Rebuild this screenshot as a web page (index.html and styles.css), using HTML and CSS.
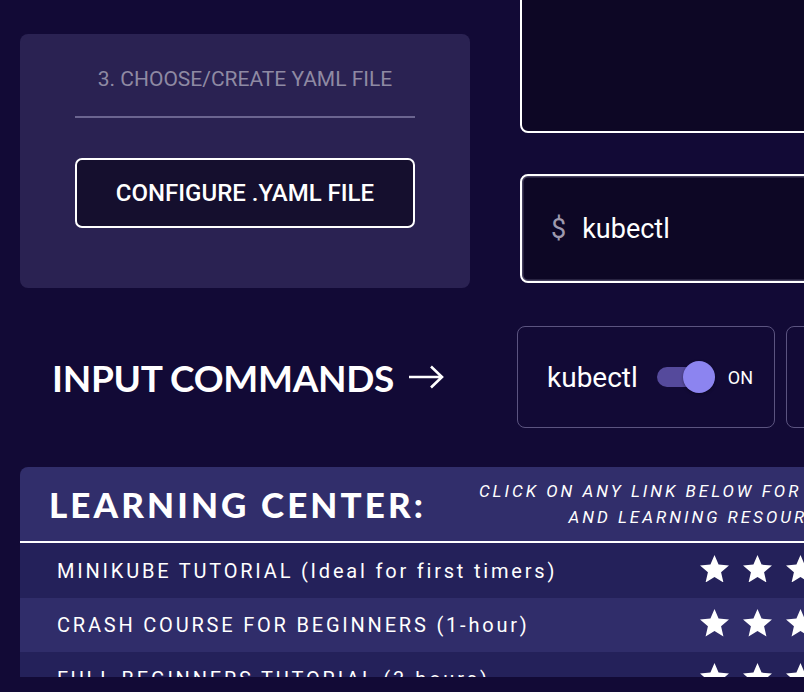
FILE: index.html
```html
<!DOCTYPE html>
<html lang="en">
<head>
<meta charset="utf-8">
<title>Kubernetes Console</title>
<link rel="stylesheet" href="styles.css">
</head>
<body>
<div class="page">
  <section class="top">
    <div class="step-card">
      <h3 class="step-title">3. CHOOSE/CREATE YAML FILE</h3>
      <hr class="step-rule">
      <button class="yaml-btn" type="button">CONFIGURE .YAML FILE</button>
    </div>
    <div class="console-col">
      <div class="output-box"></div>
      <div class="terminal"><span class="prompt">$</span><span class="cmd">kubectl</span></div>
    </div>
  </section>

  <section class="commands">
    <h2 class="commands-title">INPUT COMMANDS
      <svg class="arrow" width="36" height="26" viewBox="0 0 36 26" aria-hidden="true"><path d="M1 13H34M23 2.5L34 13L23 23.5" fill="none" stroke="#fff" stroke-width="2.6" stroke-linecap="butt" stroke-linejoin="miter"/></svg>
    </h2>
    <div class="cmd-cards">
      <div class="cmd-card">
        <span class="cmd-name">kubectl</span>
        <span class="switch"><span class="track"></span><span class="thumb"></span></span>
        <span class="switch-label">ON</span>
      </div>
      <div class="cmd-card"></div>
    </div>
  </section>

  <section class="learning">
    <header class="learn-head">
      <h2 class="learn-title">LEARNING CENTER:</h2>
      <p class="learn-note">CLICK ON ANY LINK BELOW FOR ALL<br>AND LEARNING RESOURCES</p>
    </header>
    <ul class="learn-list">
      <li class="learn-row">
        <span class="learn-text">MINIKUBE TUTORIAL (Ideal for first timers)</span>
        <span class="stars">
          <svg class="star" viewBox="2 2 20 19"><path d="M12 17.27L18.18 21l-1.64-7.03L22 9.24l-7.19-.61L12 2 9.19 8.63 2 9.24l5.46 4.73L5.82 21z"/></svg>
          <svg class="star" viewBox="2 2 20 19"><path d="M12 17.27L18.18 21l-1.64-7.03L22 9.24l-7.19-.61L12 2 9.19 8.63 2 9.24l5.46 4.73L5.82 21z"/></svg>
          <svg class="star" viewBox="2 2 20 19"><path d="M12 17.27L18.18 21l-1.64-7.03L22 9.24l-7.19-.61L12 2 9.19 8.63 2 9.24l5.46 4.73L5.82 21z"/></svg>
        </span>
      </li>
      <li class="learn-row">
        <span class="learn-text">CRASH COURSE FOR BEGINNERS (1-hour)</span>
        <span class="stars">
          <svg class="star" viewBox="2 2 20 19"><path d="M12 17.27L18.18 21l-1.64-7.03L22 9.24l-7.19-.61L12 2 9.19 8.63 2 9.24l5.46 4.73L5.82 21z"/></svg>
          <svg class="star" viewBox="2 2 20 19"><path d="M12 17.27L18.18 21l-1.64-7.03L22 9.24l-7.19-.61L12 2 9.19 8.63 2 9.24l5.46 4.73L5.82 21z"/></svg>
          <svg class="star" viewBox="2 2 20 19"><path d="M12 17.27L18.18 21l-1.64-7.03L22 9.24l-7.19-.61L12 2 9.19 8.63 2 9.24l5.46 4.73L5.82 21z"/></svg>
        </span>
      </li>
      <li class="learn-row">
        <span class="learn-text">FULL BEGINNERS TUTORIAL (3-hours)</span>
        <span class="stars">
          <svg class="star" viewBox="2 2 20 19"><path d="M12 17.27L18.18 21l-1.64-7.03L22 9.24l-7.19-.61L12 2 9.19 8.63 2 9.24l5.46 4.73L5.82 21z"/></svg>
          <svg class="star" viewBox="2 2 20 19"><path d="M12 17.27L18.18 21l-1.64-7.03L22 9.24l-7.19-.61L12 2 9.19 8.63 2 9.24l5.46 4.73L5.82 21z"/></svg>
          <svg class="star" viewBox="2 2 20 19"><path d="M12 17.27L18.18 21l-1.64-7.03L22 9.24l-7.19-.61L12 2 9.19 8.63 2 9.24l5.46 4.73L5.82 21z"/></svg>
        </span>
      </li>
    </ul>
  </section>
</div>
</body>
</html>
```

FILE: styles.css
```css
html, body {
  margin: 0;
  padding: 0;
  background: #120a36;
  overflow: hidden;
  height: 692px;
}

body {
  font-family: Roboto, "Liberation Sans", sans-serif;
  color: #fff;
}

.page {
  width: 1200px;
  padding-left: 20px;
}

/* ---------- top ---------- */
.top {
  display: flex;
  align-items: flex-start;
  gap: 50px;
  margin-top: -40px;
}

.step-card {
  width: 450px;
  box-sizing: border-box;
  margin-top: 74px;
  padding: 33px 55px 60px;
  background: #2a2252;
  border-radius: 8px;
  display: flex;
  flex-direction: column;
}

.step-title {
  margin: 0;
  font-family: Roboto, sans-serif;
  font-weight: 400;
  font-size: 21px;
  line-height: 24px;
  color: #8f8aa3;
  text-align: center;
}

.step-rule {
  margin: 25px 0 0;
  border: 0;
  height: 2px;
  background: #6b6590;
}

.yaml-btn {
  margin-top: 40px;
  height: 70px;
  border: 2px solid #fff;
  border-radius: 7px;
  background: #150f2e;
  color: #fff;
  font-family: Roboto, sans-serif;
  font-weight: 500;
  font-size: 24px;
  padding: 0;
}

.console-col {
  width: 600px;
  display: flex;
  flex-direction: column;
  gap: 41px;
}

.output-box {
  height: 173px;
  box-sizing: border-box;
  border: 2px solid #fff;
  border-radius: 8px;
  background: #0d0725;
}

.terminal {
  height: 109px;
  box-sizing: border-box;
  border: 2px solid #fff;
  border-radius: 8px;
  box-shadow: inset 0 0 0 1.5px #45405f;
  background: #0d0725;
  display: flex;
  align-items: center;
  gap: 16px;
  padding-left: 29px;
}

.prompt {
  font-size: 27px;
  color: #9d99ae;
}

.cmd {
  font-size: 27px;
  color: #fff;
}

/* ---------- commands ---------- */
.commands {
  display: flex;
  align-items: center;
  margin-top: 38px;
}

.commands-title {
  width: 497px;
  box-sizing: border-box;
  margin: 0;
  padding-left: 32px;
  font-family: Lato, sans-serif;
  font-weight: 700;
  font-size: 37px;
  letter-spacing: -0.3px;
  display: flex;
  align-items: center;
  gap: 14px;
}

.arrow {
  display: block;
}

.cmd-cards {
  display: flex;
  gap: 11px;
}

.cmd-card {
  width: 258px;
  height: 102px;
  box-sizing: border-box;
  border: 1px solid #5b5480;
  border-radius: 8px;
  display: flex;
  align-items: center;
  padding-left: 29px;
}

.cmd-name {
  font-size: 28px;
  color: #fff;
}

.switch {
  position: relative;
  width: 58px;
  height: 32px;
  margin-left: 19px;
}

.track {
  position: absolute;
  left: 0;
  top: 6px;
  width: 50px;
  height: 20px;
  border-radius: 10px;
  background: #554a9c;
}

.thumb {
  position: absolute;
  left: 26px;
  top: 0;
  width: 32px;
  height: 32px;
  border-radius: 50%;
  background: #8c84f0;
  box-shadow: 0 1px 3px rgba(0, 0, 0, 0.4);
}

.switch-label {
  margin-left: 13px;
  font-size: 18px;
  color: #fff;
}

/* ---------- learning ---------- */
.learning {
  margin-top: 39px;
  width: 900px;
  height: 210px;
  overflow: hidden;
  border-radius: 8px 8px 0 0;
}

.learn-head {
  height: 74px;
  background: #312e6b;
  border-bottom: 2px solid #fff;
  display: flex;
  align-items: center;
  justify-content: space-between;
  padding: 0 74px 0 29px;
}

.learn-title {
  margin: 0;
  font-family: Lato, sans-serif;
  font-weight: 900;
  font-size: 35px;
  letter-spacing: 3.1px;
  color: #fff;
}

.learn-note {
  margin: 0;
  font-family: Roboto, sans-serif;
  font-style: italic;
  font-size: 17px;
  line-height: 26px;
  letter-spacing: 3px;
  text-align: right;
  color: #fff;
}

.learn-list {
  list-style: none;
  margin: 0;
  padding: 0;
}

.learn-row {
  height: 54px;
  display: grid;
  grid-template-columns: 680px auto;
  align-items: center;
  background: #24215a;
}

.learn-row:nth-child(even) {
  background: #302d6a;
}

.learn-row:first-child {
  height: 55px;
}

.learn-text {
  padding-left: 37px;
  font-size: 20px;
  letter-spacing: 2.8px;
  color: #fff;
}

.stars {
  display: flex;
  gap: 14px;
  margin-top: -4px;
}

.star {
  width: 29px;
  height: 27.5px;
  fill: #fff;
}
```
